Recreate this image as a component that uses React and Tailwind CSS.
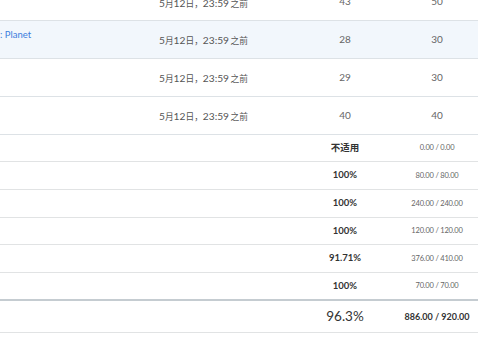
import React from 'react'

const assignments = [
	{ name: '', score: '43', total: '50' },
	{ name: ': Planet', score: '28', total: '30', active: true },
	{ name: '', score: '29', total: '30' },
	{ name: '', score: '40', total: '40' },
]

const groups = [
	{ pct: '不适用', pts: '0.00 / 0.00' },
	{ pct: '100%', pts: '80.00 / 80.00' },
	{ pct: '100%', pts: '240.00 / 240.00' },
	{ pct: '100%', pts: '120.00 / 120.00' },
	{ pct: '91.71%', pts: '376.00 / 410.00' },
	{ pct: '100%', pts: '70.00 / 70.00' },
]

// due date: CJK glyphs sit a bit smaller than the digits in the reference
const Due = () => (
	<span className="text-[10.2px] leading-[12px] text-[#555] whitespace-nowrap">
		5<span className="text-[8.7px]">月</span>12<span className="text-[8.7px]">日，</span>23:59
		<span className="ml-[1.5px] text-[8.7px]">之前</span>
	</span>
)

const App = () => {
	return (
		<div
			className="h-[342px] w-[478px] overflow-hidden bg-white"
			style={{ fontFamily: 'Lato, "Noto Sans CJK SC", sans-serif' }}
		>
			<table className="-mt-[16px] w-[484px] table-fixed border-collapse">
				<colgroup>
					<col className="w-[150px]" />
					<col className="w-[150px]" />
					<col className="w-[90px]" />
					<col className="w-[94px]" />
				</colgroup>
				<tbody>
					{assignments.map((a, i) => (
						<tr
							key={i}
							className={`${i === 0 ? 'h-[36px]' : 'h-[38px]'} border-b border-[#dde2e6] ${a.active ? 'bg-[#f2f7fc]' : ''}`}
						>
							<td className="align-top pt-[7px] text-[9.5px] text-[#3b7ddd] whitespace-nowrap">
								{a.name}
							</td>
							<td className="pl-[9px] pb-[2px]">
								<Due />
							</td>
							<td className="text-center text-[10px] text-[#666]">{a.score}</td>
							<td className="text-center text-[10px] text-[#666]">{a.total}</td>
						</tr>
					))}
					{groups.map((g, i) => (
						<tr
							key={'g' + i}
							className={`h-[27.7px] ${i === groups.length - 1 ? 'border-b-2 border-[#c5ccd1]' : 'border-b border-[#e1e3e4]'}`}
						>
							<td />
							<td />
							<td className="text-center text-[9.5px] font-bold text-[#333]">{g.pct}</td>
							<td className="text-center text-[7.5px] text-[#666] tracking-[-0.2px]">{g.pts}</td>
						</tr>
					))}
					<tr className="h-[32px] border-b border-[#e1e3e4]">
						<td />
						<td />
						<td className="text-center text-[13.5px] text-[#333]">96.3%</td>
						<td className="text-center text-[9px] font-bold text-[#333]">886.00 / 920.00</td>
					</tr>
				</tbody>
			</table>
		</div>
	)
}

export default App
